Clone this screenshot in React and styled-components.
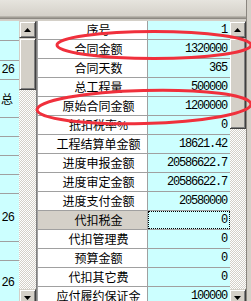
import React from "react";
import styled, { createGlobalStyle } from "styled-components";

const Global = createGlobalStyle`
  html, body { margin: 0; padding: 0; overflow: hidden; background: #d4d0c8; }
  #root { width: 251px; height: 301px; overflow: hidden; }
`;

const Window = styled.div`
  position: relative;
  width: 251px;
  height: 306px;
  display: flex;
  background: #d4d0c8;
  font-family: "Noto Sans CJK SC", "Liberation Sans", sans-serif;
`;

const Body = styled.div`
  flex: 1;
  display: flex;
  flex-direction: column;
  min-width: 0;
`;

const TopBar = styled.div`
  height: 16px;
  flex: none;
  background: linear-gradient(#e6e4de, #d4d0c8);
  border-bottom: 1px solid #b8b4ac;
  box-shadow: 0 1px 0 #a19d95, 0 2px 0 #8d8982, 0 3px 0 #cfcbc4;
  margin-bottom: 4px;
`;

const Panels = styled.div`
  flex: 1;
  display: flex;
  min-height: 0;
`;

const LeftPane = styled.div`
  width: 19px;
  flex: none;
  background: #ccffff;
  overflow: hidden;
  display: flex;
  flex-direction: column;
`;

const LeftCell = styled.div`
  height: ${(p) => p.$h}px;
  flex: none;
  border-bottom: 1px solid #a0a0a0;
  box-sizing: border-box;
  display: flex;
  align-items: center;
  justify-content: flex-end;
  overflow: hidden;
  white-space: nowrap;
  font-family: "Liberation Mono", monospace;
  font-size: 12px;
  letter-spacing: -1px;
  color: #000;
  padding-right: 5px;
`;

const LeftCellCJK = styled(LeftCell)`
  font-family: "Noto Sans CJK SC", sans-serif;
  letter-spacing: 0;
  padding-right: 6px;
`;

const ScrollBar = styled.div`
  width: 17px;
  flex: none;
  display: flex;
  flex-direction: column;
  background-color: #fff;
  background-image: conic-gradient(#d4d0c8 25%, #fff 0 50%, #d4d0c8 0 75%, #fff 0);
  background-size: 2px 2px;
`;

const Button3D = styled.div`
  flex: none;
  box-sizing: border-box;
  background: #d4d0c8;
  border-top: 1px solid #d4d0c8;
  border-left: 1px solid #d4d0c8;
  border-right: 1px solid #404040;
  border-bottom: 1px solid #404040;
  box-shadow: inset 1px 1px 0 #fff, inset -1px -1px 0 #808080;
`;

const ArrowButton = styled(Button3D)`
  height: 17px;
  display: flex;
  align-items: center;
  justify-content: center;
`;

const Thumb = styled(Button3D)`
  height: ${(p) => p.$h}px;
`;

const Track = styled.div`
  flex: 1;
`;

const Separator = styled.div`
  width: 2px;
  flex: none;
  background: linear-gradient(90deg, #808080 0 1px, #a0a0a0 1px);
`;

const Grid = styled.div`
  flex: 1;
  display: flex;
  flex-direction: column;
  background: #fff;
  min-width: 0;
`;

const Row = styled.div`
  display: grid;
  grid-template-columns: 110px 82px;
  height: 19px;
  flex: none;
`;

const Label = styled.div`
  box-sizing: border-box;
  border-right: 1px solid #a0a0a0;
  border-bottom: 1px solid #a0a0a0;
  background: ${(p) => (p.$active ? "#d4d0c8" : "#fff")};
  font-size: 12px;
  line-height: 18px;
  text-align: center;
  padding-left: 12px;
  color: #000;
  white-space: nowrap;
  overflow: hidden;
`;

const Value = styled.div`
  box-sizing: border-box;
  border-bottom: 1px solid #a0a0a0;
  background: #ccffff;
  font-family: "Liberation Mono", monospace;
  font-size: 12px;
  letter-spacing: -1.2px;
  line-height: 18px;
  text-align: right;
  padding-right: 3px;
  color: #000;
  white-space: nowrap;
  position: relative;
`;

const Focus = styled.div`
  position: absolute;
  inset: 0 0 0 0;
  border: 1px dotted #000;
`;

const Frame = styled.div`
  width: 5px;
  flex: none;
  border-left: 1px solid #8a867f;
  background: #d4d0c8;
  box-sizing: border-box;
`;

const Overlay = styled.svg`
  position: absolute;
  left: 0;
  top: 0;
  pointer-events: none;
`;

const Up = () => (
  <svg width="7" height="4" viewBox="0 0 7 4">
    <path d="M3.5 0 L7 4 L0 4 Z" fill="#000" />
  </svg>
);
const Down = () => (
  <svg width="7" height="4" viewBox="0 0 7 4">
    <path d="M0 0 L7 0 L3.5 4 Z" fill="#000" />
  </svg>
);

const Scroll = ({ thumb }) => (
  <ScrollBar>
    <ArrowButton>
      <Up />
    </ArrowButton>
    <Thumb $h={thumb} />
    <Track />
    <ArrowButton>
      <Down />
    </ArrowButton>
  </ScrollBar>
);

const rows = [
  ["序号", "1"],
  ["合同金额", "1320000"],
  ["合同天数", "365"],
  ["总工程量", "500000"],
  ["原始合同金额", "1200000"],
  ["抵扣税率%", "0"],
  ["工程结算单金额", "18621.42"],
  ["进度申报金额", "20586622.7"],
  ["进度审定金额", "20586622.7"],
  ["进度支付金额", "20580000"],
  ["代扣税金", "0"],
  ["代扣管理费", "0"],
  ["预算金额", "0"],
  ["代扣其它费", "0"],
  ["应付履约保证金", "100000"],
];

const leftRows = [
  { h: 20, t: "" },
  { h: 20, t: "" },
  { h: 19, t: "26" },
  { h: 38, t: "总", cjk: true },
  { h: 19, t: "" },
  { h: 19, t: "" },
  { h: 19, t: "" },
  { h: 19, t: "" },
  { h: 48, t: "26" },
  { h: 19, t: "" },
  { h: 45, t: "26" },
];

export default function App() {
  return (
    <>
      <Global />
      <Window>
        <Body>
          <TopBar />
          <Panels>
            <LeftPane>
              {leftRows.map((r, i) =>
                r.cjk ? (
                  <LeftCellCJK key={i} $h={r.h}>
                    {r.t}
                  </LeftCellCJK>
                ) : (
                  <LeftCell key={i} $h={r.h}>
                    {r.t}
                  </LeftCell>
                )
              )}
            </LeftPane>
            <Scroll thumb={52} />
            <Separator />
            <Grid>
              {rows.map(([l, v], i) => (
                <Row key={i}>
                  <Label $active={i === 10}>{l}</Label>
                  <Value>
                    {v}
                    {i === 10 && <Focus />}
                  </Value>
                </Row>
              ))}
            </Grid>
            <Scroll thumb={91} />
          </Panels>
        </Body>
        <Frame />
        <Overlay width="251" height="301" viewBox="0 0 251 301">
          <ellipse cx="154" cy="45" rx="97" ry="13.5" fill="none" stroke="#f0303c" strokeWidth="3" />
          <ellipse cx="144" cy="107" rx="107" ry="16.5" fill="none" stroke="#f0303c" strokeWidth="3" transform="rotate(-1.5 144 107)" />
        </Overlay>
      </Window>
    </>
  );
}
